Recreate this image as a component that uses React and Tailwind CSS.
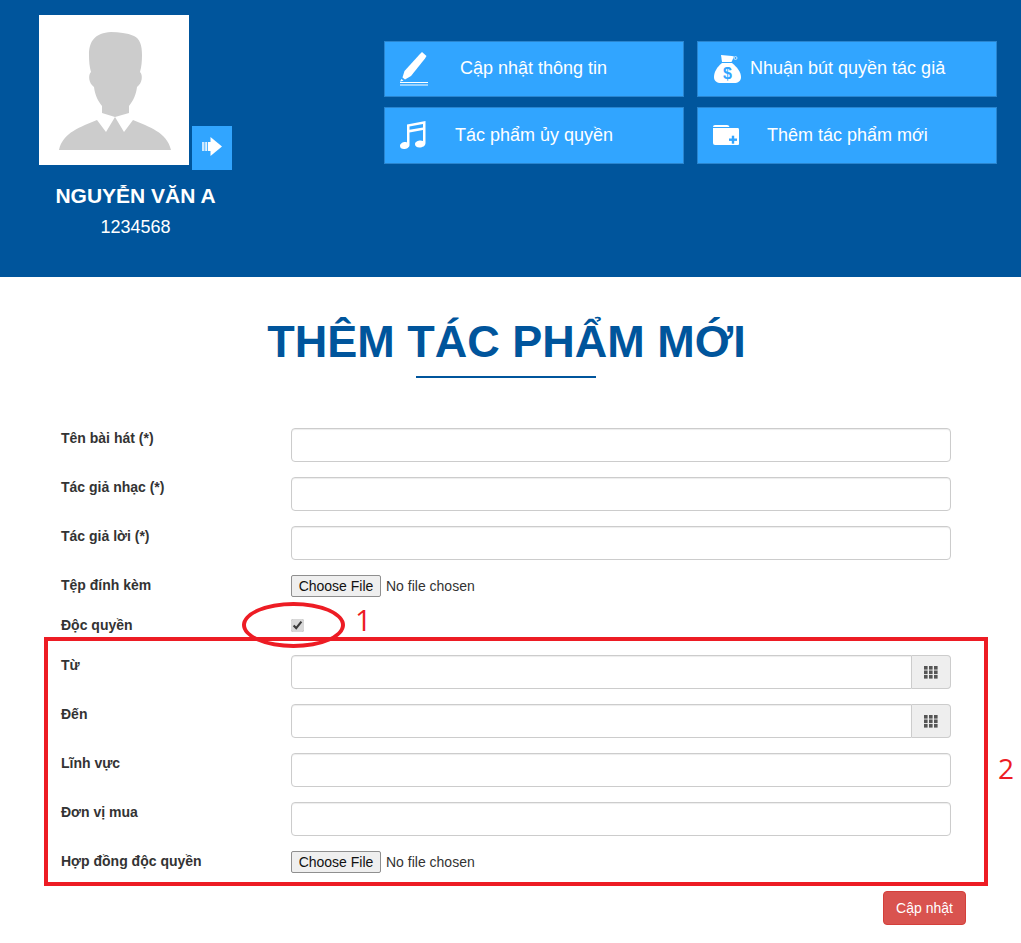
const font = { fontFamily: '"Liberation Sans", Arial, sans-serif' };

function PenIcon() {
  return (
    <svg width="30" height="34" viewBox="0 0 30 34" fill="white">
      <path d="M23 0 L27.5 4 L26 6.5 L12 24 L6 27.5 L3.5 25.5 L5.5 19 L20.5 2.5 Z" />
      <path d="M1 29.5 L2.5 27 L4.5 28.8 Z" />
      <rect x="1" y="30" width="28" height="1" />
      <rect x="1" y="32.5" width="28" height="1" />
    </svg>
  );
}

function MusicIcon() {
  return (
    <svg width="26" height="28" viewBox="0 0 26 28" fill="white">
      <path d="M7 3.5 L25.5 0 L25.5 22 C25.5 25 22.5 26.5 19.5 26.5 C16.5 26.5 15 25 15 23.2 C15 20.8 18 19.5 20.5 19.5 C21.5 19.5 22.3 19.7 23 20 L23 9 L9.5 11.5 L9.5 24 C9.5 26.5 6.5 28 4 28 C1.5 28 0 26.7 0 25 C0 22.5 3 21 5 21 C5.8 21 6.5 21.2 7 21.4 Z M9.5 5.6 L9.5 8.8 L23 6.4 L23 3.1 Z" fillRule="evenodd" />
    </svg>
  );
}

function MoneyIcon() {
  return (
    <svg width="27" height="28" viewBox="0 0 27 28" fill="white">
      <path d="M7 0 L18 1 L20 1.5 L17.5 7 L8 7 Z" />
      <path d="M8 8 L18 8 C23 12 27 17 27 22 C27 26 24 28 20 28 L7 28 C3 28 0 26 0 22 C0 17 3 12 8 8 Z" />
      <circle cx="21.5" cy="3" r="1.5" fill="none" stroke="white" strokeWidth="0.7" />
      <text x="13.5" y="24" fontSize="16" fontWeight="700" fill="#31a5ff" textAnchor="middle" style={font}>$</text>
    </svg>
  );
}

function FolderIcon() {
  return (
    <svg width="27" height="21" viewBox="0 0 27 21" fill="white">
      <path d="M0 2 Q0 0 2 0 L14 0 Q16 0 16.5 2 L0 2 Z" />
      <path d="M0 3 L25 3 Q26 3 26 4.5 L26 19 Q26 20 25 20 L2 20 Q0 20 0 18 Z" />
      <rect x="16" y="13.5" width="8" height="2.4" fill="#31a5ff" />
      <rect x="18.8" y="10.7" width="2.4" height="8" fill="#31a5ff" />
    </svg>
  );
}

function ArrowIcon() {
  return (
    <svg width="20" height="19" viewBox="0 0 20 19" fill="white">
      <rect x="0" y="5" width="2.5" height="9" opacity="0.75" />
      <rect x="3.2" y="5" width="2" height="9" opacity="0.85" />
      <rect x="6" y="5" width="3" height="9" />
      <path d="M8.5 0 L20 9.5 L8.5 19 Z" />
    </svg>
  );
}

function Avatar() {
  return (
    <svg width="150" height="150" viewBox="0 0 150 150">
      <rect width="150" height="150" fill="white" />
      <path
        fill="#cccccc"
        d="M50 40 C50 26 56 18 72 17 C80 17 88 18 95 21 C101 24 103 30 103 40 C103 46 102.5 52 101 57 C104 60 103.5 68 98 72 C97 80 94 86 90 91 L90 98 L76 102 L63 98 L63 91 C59 86 56 80 55 72 C49.5 68 49 60 52 57 C50.5 52 50 46 50 40 Z"
      />
      <path
        fill="#cccccc"
        d="M58 105 C42 112 24 117 20 135 L132 135 C128 117 110 112 94 105 L85 117 L76 102 L67 117 Z"
      />
    </svg>
  );
}

function CalendarGrid() {
  return (
    <svg width="14" height="13" viewBox="0 0 14 13" fill="#555555">
      {[0, 5, 10].map((x) =>
        [0, 4.5, 9].map((y) => <rect key={`${x}-${y}`} x={x} y={y} width="3.6" height="3.6" />)
      )}
    </svg>
  );
}

function NavButton({ icon, label, iconClass, textClass }) {
  return (
    <a className="flex items-center border border-[#2a85cf] bg-[#31a5ff] pb-[1px] text-[18px] text-white">
      <span className={`flex w-[60px] shrink-0 justify-center ${iconClass}`}>{icon}</span>
      <span className={textClass}>{label}</span>
    </a>
  );
}

function TextRow({ label, addon }) {
  return (
    <div className="mb-[15px] flex h-[34px] items-start">
      <div className="w-[291px] shrink-0 pl-[61px] text-[14px] font-bold text-[#333333]">{label}</div>
      <div className="flex w-[660px]">
        <input
          type="text"
          className={`h-[34px] min-w-0 flex-1 border border-[#cccccc] bg-white shadow-[inset_0_1px_1px_rgba(0,0,0,0.075)] ${
            addon ? "rounded-l-[4px]" : "rounded-[4px]"
          }`}
        />
        {addon && (
          <span className="flex h-[34px] w-[39px] items-center justify-center rounded-r-[4px] border border-l-0 border-[#cccccc] bg-[#eeeeee]">
            <CalendarGrid />
          </span>
        )}
      </div>
    </div>
  );
}

function FileRow({ label, className }) {
  return (
    <div className={`flex items-start ${className}`}>
      <div className="w-[291px] shrink-0 pl-[61px] text-[14px] font-bold text-[#333333]">{label}</div>
      <div className="flex items-center text-[14px] text-[#333333]">
        <span className="flex h-[22px] w-[90px] items-center justify-center rounded-[2px] border border-[#8f8f8f] bg-[#efefef] text-[14px] text-[#111111]">
          Choose File
        </span>
        <span className="ml-[5px]">No file chosen</span>
      </div>
    </div>
  );
}

export default function App() {
  return (
    <div className="relative h-[943px] w-[1021px] overflow-hidden bg-white" style={font}>
      <header className="flex h-[277px] bg-[#00559c] pl-[39px] pt-[15px]">
        <div className="w-[193px] shrink-0">
          <div className="flex items-end">
            <Avatar />
            <button className="mb-[-5px] ml-[3px] flex h-[44px] w-[40px] items-center justify-center bg-[#31a5ff] pb-[4px]">
              <ArrowIcon />
            </button>
          </div>
          <div className="w-[193px] text-center text-white">
            <div className="mt-[18px] text-[21px] font-bold leading-[26px]">NGUYỄN VĂN A</div>
            <div className="mt-[6px] text-[18px] leading-[24px]">1234568</div>
          </div>
        </div>
        <div className="ml-[152px] mt-[26px] grid h-[123px] w-[613px] grid-cols-[300px_300px] grid-rows-[56px_57px] gap-x-[13px] gap-y-[10px]">
          <NavButton icon={<PenIcon />} label="Cập nhật thông tin" iconClass="ml-[-1px]" textClass="ml-[16px]" />
          <NavButton icon={<MoneyIcon />} label="Nhuận bút quyền tác giả" iconClass="ml-[-1px]" textClass="ml-[-7px]" />
          <NavButton icon={<MusicIcon />} label="Tác phẩm ủy quyền" iconClass="ml-[-2px]" textClass="ml-[12px]" />
          <NavButton icon={<FolderIcon />} label="Thêm tác phẩm mới" iconClass="ml-[-2px]" textClass="ml-[11px]" />
        </div>
      </header>

      <main>
        <h1 className="mt-[39px] pr-[8px] text-center text-[45px] font-bold leading-[52px] text-[#00559c]">THÊM TÁC PHẨM MỚI</h1>
        <div className="ml-[416px] mt-[8px] h-[2px] w-[180px] bg-[#00559c]" />

        <form className="mt-[50px]">
          <TextRow label="Tên bài hát (*)" />
          <TextRow label="Tác giả nhạc (*)" />
          <TextRow label="Tác giả lời (*)" />
          <FileRow label="Tệp đính kèm" className="mb-[20px] h-[22px]" />
          <div className="mb-[22px] flex h-[16px] items-center">
            <div className="w-[291px] shrink-0 pl-[61px] text-[14px] font-bold text-[#333333]">Độc quyền</div>
            <input type="checkbox" defaultChecked className="h-[13px] w-[13px] accent-[#d8d8d8]" />
          </div>
          <TextRow label="Từ" addon />
          <TextRow label="Đến" addon />
          <TextRow label="Lĩnh vực" />
          <TextRow label="Đơn vị mua" />
          <FileRow label="Hợp đồng độc quyền" className="h-[22px]" />
          <div className="mt-[18px] flex w-[966px] justify-end">
            <button type="button" className="h-[34px] w-[83px] rounded-[4px] border border-[#d43f3a] bg-[#d9534f] text-[14px] text-white">
              Cập nhật
            </button>
          </div>
        </form>
      </main>

      {/* annotations drawn over the form */}
      <div className="pointer-events-none absolute left-[44px] top-[637px] h-[249px] w-[944px] border-[4px] border-[#ed1c24]" />
      <div className="pointer-events-none absolute left-[242px] top-[602px] h-[46px] w-[103px] rounded-[50%] border-[4px] border-[#ed1c24]" />
      <div className="pointer-events-none absolute left-[282px] top-[641px] h-[1px] w-[22px] bg-white" />
      <div className="absolute left-[355px] top-[600px] text-[29px] leading-[40px] text-[#ed1c24]" style={{ fontFamily: '"Open Sans", sans-serif' }}>1</div>
      <div className="absolute left-[998px] top-[748px] text-[28px] leading-[40px] text-[#ed1c24]" style={{ fontFamily: '"Open Sans", sans-serif' }}>2</div>
    </div>
  );
}
